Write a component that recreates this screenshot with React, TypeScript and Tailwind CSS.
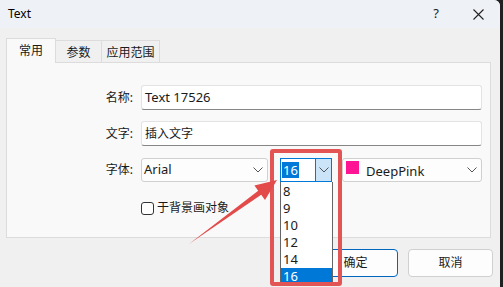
import React from 'react';

const font = "font-['Noto_Sans','Noto_Sans_CJK_SC',sans-serif]";

const Chevron: React.FC<{ className?: string }> = ({ className }) => (
  <svg width="10" height="6" viewBox="0 0 10 6" className={className}>
    <path d="M0.5 0.5 L5 5 L9.5 0.5" fill="none" stroke="#555" strokeWidth="1" />
  </svg>
);

const sizes = ['8', '9', '10', '12', '14', '16'];

const App: React.FC = () => {
  return (
    <div className={`relative h-[287px] w-[503px] overflow-hidden bg-[#202020] text-[12px] text-[#1a1a1a] ${font}`}>
      <div className="flex h-full w-[500px] flex-col rounded-tr-[6px] bg-[#f0f0f0]">
        {/* title bar */}
        <div className="flex h-[28px] items-center bg-[#eef1f6] pl-[8px] rounded-tr-[6px]">
          <span className="text-[12px] text-black">Text</span>
          <span className="ml-auto mr-[34px] text-[13px] text-[#222]">?</span>
          <svg width="11" height="11" viewBox="0 0 11 11" className="mr-[16px]">
            <path d="M0.5 0.5 L10.5 10.5 M10.5 0.5 L0.5 10.5" stroke="#222" strokeWidth="1.1" />
          </svg>
        </div>

        {/* tabs */}
        <div className="mt-[10px] flex items-end pl-[6px]">
          <div className="relative z-10 -mb-px flex h-[25px] w-[50px] items-start justify-center border border-b-0 border-[#dcdcdc] bg-[#f9f9f9] pt-[3px]">
            常用
          </div>
          <div className="flex h-[22px] w-[46px] items-center justify-center border border-l-0 border-b-0 border-[#dcdcdc] pt-[2px]">
            参数
          </div>
          <div className="flex h-[22px] w-[58px] items-center justify-center border border-l-0 border-b-0 border-[#dcdcdc] pt-[2px]">
            应用范围
          </div>
        </div>

        {/* panel */}
        <div className="ml-[6px] h-[176px] w-[485px] border border-[#dcdcdc] bg-[#f9f9f9] pt-[22px]">
          <div className="grid grid-cols-[126px_1fr] items-center gap-x-[8px] gap-y-[11px] pr-[10px]">
            <span className="text-right">名称:</span>
            <div className="flex h-[25px] items-center rounded-[3px] border border-[#e3e3e3] border-b-[#868686] bg-white pl-[3px] text-[13px]">
              Text 17526
            </div>
            <span className="text-right">文字:</span>
            <div className="flex h-[25px] items-center rounded-[3px] border border-[#e3e3e3] border-b-[#868686] bg-white pl-[3px] text-[12px]">
              插入文字
            </div>
            <span className="mt-[1px] text-right">字体:</span>
            <div className="mt-[1px] flex items-center">
              <div className="flex h-[24px] w-[127px] items-center rounded-[3px] border border-[#d0d0d0] bg-[#fdfdfd] pl-[2px] pr-[4px] text-[13px]">
                Arial
                <Chevron className="ml-auto" />
              </div>
              <div className="ml-[12px] flex h-[24px] w-[52px] border border-[#0078d7] bg-white">
                <div className="flex flex-1 items-center pl-[1px]">
                  <span className="bg-[#0078d7] px-[1px] text-[13px] leading-[16px] text-white">16</span>
                </div>
                <div className="flex w-[16px] items-center justify-center border-l border-[#0078d7] bg-[#cce4f7]">
                  <Chevron />
                </div>
              </div>
              <div className="ml-[10px] flex h-[24px] w-[140px] items-start rounded-[3px] border border-[#d0d0d0] bg-[#fdfdfd] pr-[4px]">
                <div className="ml-[3px] mt-[2px] h-[13px] w-[13px] bg-[#ff1493]" />
                <div className="ml-[7px] pt-[4px] text-[13px] leading-[16px]">DeepPink</div>
                <Chevron className="ml-auto mt-[8px]" />
              </div>
            </div>
          </div>
          <div className="ml-[134px] mt-[17px] flex items-center">
            <div className="h-[13px] w-[13px] rounded-[3px] border border-[#333] bg-white" />
            <span className="ml-[3px]">于背景画对象</span>
          </div>
        </div>

        {/* buttons */}
        <div className="mt-[11px] flex justify-end gap-[10px] pr-[7px]">
          <div className="flex h-[28px] w-[85px] items-center justify-center rounded-[4px] border border-[#0067c0] bg-[#fdfdfd]">
            确定
          </div>
          <div className="flex h-[28px] w-[85px] items-center justify-center rounded-[4px] border border-[#d0d0d0] bg-[#fdfdfd]">
            取消
          </div>
        </div>
      </div>

      {/* dropdown list */}
      <div className="absolute left-[280px] top-[182px] w-[53px] border border-[#666] border-t-0 bg-white pt-[1px]">
        {sizes.map((s) => (
          <div
            key={s}
            className={`h-[17px] pl-[2px] text-[13px] leading-[17px] ${s === '16' ? 'bg-[#0078d7] text-white' : ''}`}
          >
            {s}
          </div>
        ))}
      </div>

      {/* annotation */}
      <div className="absolute left-[270px] top-[149px] h-[137px] w-[72px] rounded-[3px] border-[4px] border-[#e35454]" />
      <svg className="absolute left-0 top-0" width="503" height="287" viewBox="0 0 503 287">
        <polygon
          points="189,244 258.2,190.8 254.4,185.5 277,180 265,200.1 261.2,194.8"
          fill="#e34a4a"
        />
      </svg>
    </div>
  );
};

export default App;
